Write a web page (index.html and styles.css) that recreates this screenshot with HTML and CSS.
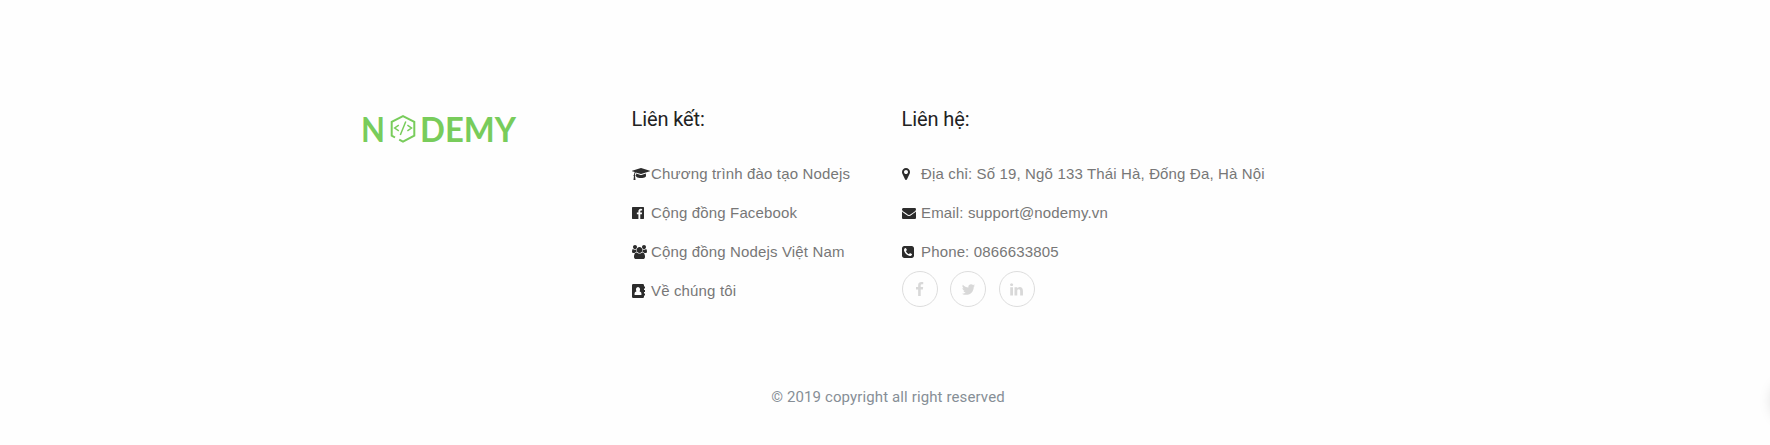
FILE: index.html
```html
<!DOCTYPE html>
<html lang="vi">
<head>
<meta charset="utf-8">
<title>Nodemy</title>
<link rel="stylesheet" href="styles.css">
</head>
<body>
<footer class="footer">
  <div class="columns">
    <div class="brand">
      <svg class="logo" width="160" height="46" viewBox="0 -3 160 46">
        <g class="logo-text">
          <text x="-1" y="32.500" textLength="24" lengthAdjust="spacingAndGlyphs">N</text>
          <text x="58" y="32.500" textLength="96" lengthAdjust="spacingAndGlyphs">DEMY</text>
        </g>
        <g class="logo-mark">
          <path d="M33 28.500L29.700 26.600V12.800L41 7L52.300 12.800V26.600L41 32.700L37.200 30.600"/>
          <path class="logo-code" d="M36.800 16.200L32.700 19L36.800 21.800M45.400 16.200L49.500 19L45.400 21.800M43.800 12.500L38.300 26"/>
        </g>
      </svg>
    </div>
    <div class="links">
      <h2 class="title">Liên kết:</h2>
      <ul class="list">
        <li class="item"><span class="icon"><svg width="18" height="14" viewBox="0 0 2304 1792"><path d="M1774 836l18 316q4 69-82 128t-235 93.500-323 34.500-323-34.500-235-93.500-82-128l18-316 574 181q22 7 48 7t48-7zm530-324q0 23-22 31l-1120 352q-4 1-10 1t-10-1l-652-206q-43 34-71 111.500t-34 178.500q63 36 63 109 0 69-58 107l58 433q2 14-8 25-9 11-24 11h-192q-15 0-24-11-10-11-8-25l58-433q-58-38-58-107 0-73 65-111 11-207 98-330l-333-104q-22-8-22-31t22-31l1120-352q4-1 10-1t10 1l1120 352q22 8 22 31z"/></svg></span>Chương trình đào tạo Nodejs</li>
        <li class="item"><span class="icon"><svg width="12" height="14" viewBox="128 0 1536 1792"><path d="M1579 128q35 0 60 25t25 60v1366q0 35-25 60t-60 25h-391v-595h199l30-232h-229v-148q0-56 23.500-84t91.500-28l122-1v-207q-63-9-178-9-136 0-217.500 80t-81.500 226v171h-200v232h200v595h-735q-35 0-60-25t-25-60v-1366q0-35 25-60t60-25h1366z"/></svg></span>Cộng đồng Facebook</li>
        <li class="item"><span class="icon"><svg width="15" height="14" viewBox="-64 0 1920 1792"><path d="M529 896q-162 5-265 128h-134q-82 0-138-40.500t-56-118.500q0-353 124-353 6 0 43.500 21t97.500 42.500 119 21.500q67 0 133-23-5 37-5 66 0 139 81 256zm1071 637q0 120-73 189.500t-194 69.500h-874q-121 0-194-69.500t-73-189.500q0-53 3.500-103.500t14-109 26.500-108.500 43-97.500 62-81 85.500-53.500 111.500-20q10 0 43 21.500t73 48 107 48 135 21.500 135-21.500 107-48 73-48 43-21.500q61 0 111.500 20t85.500 53.500 62 81 43 97.500 26.500 108.500 14 109 3.500 103.500zm-1024-1277q0 106-75 181t-181 75-181-75-75-181 75-181 181-75 181 75 75 181zm704 384q0 159-112.500 271.500t-271.500 112.500-271.500-112.500-112.500-271.500 112.500-271.500 271.500-112.500 271.500 112.500 112.500 271.500zm576 225q0 78-56 118.500t-138 40.500h-134q-103-123-265-128 81-117 81-256 0-29-5-66 66 23 133 23 59 0 119-21.500t97.500-42.500 43.500-21q124 0 124 353zm-128-609q0 106-75 181t-181 75-181-75-75-181 75-181 181-75 181 75 75 181z"/></svg></span>Cộng đồng Nodejs Việt Nam</li>
        <li class="item"><span class="icon"><svg width="14" height="14" viewBox="0 0 14 14"><path fill-rule="evenodd" d="M1.200 0h9.600q1.200 0 1.200 1.200V2.500h1v2h-1v1.500h1v2h-1v1.500h1v2h-1v1.300q0 1.200-1.200 1.200H1.200Q0 14 0 12.800V1.200Q0 0 1.200 0zM6 3a2.200 2.500 0 0 0-1.500 4.200Q2.400 7.700 2.400 10.200q0 .8.800.8h5.600q.8 0 .8-.8 0-2.500-2.100-3A2.200 2.500 0 0 0 6 3z"/></svg></span>Về chúng tôi</li>
      </ul>
    </div>
    <div class="contact">
      <h2 class="title">Liên hệ:</h2>
      <ul class="list">
        <li class="item"><span class="icon"><svg width="8" height="14" viewBox="384 0 1024 1792"><path d="M1152 640q0-106-75-181t-181-75-181 75-75 181 75 181 181 75 181-75 75-181zm256 0q0 109-33 179l-364 774q-16 33-47.500 52t-67.500 19-67.500-19-46.500-52l-365-774q-33-70-33-179 0-212 150-362t362-150 362 150 150 362z"/></svg></span>Địa chỉ: Số 19, Ngõ 133 Thái Hà, Đống Đa, Hà Nội</li>
        <li class="item"><span class="icon"><svg width="14" height="14" viewBox="0 0 1792 1792"><path d="M1792 710v794q0 66-47 113t-113 47h-1472q-66 0-113-47t-47-113v-794q44 49 101 87 362 246 497 345 57 42 92.500 65.500t94.500 48 110 24.500h2q51 0 110-24.500t94.500-48 92.500-65.500q170-123 498-345 57-39 100-87zm0-294q0 79-49 151t-122 123q-376 261-468 325-10 7-42.500 31t-54 38.500-52 32.500-57.500 27-50 9h-2q-23 0-50-9t-57.500-27-52-32.500-54-38.500-42.500-31q-91-64-262-182.500t-205-142.500q-62-42-117-115.500t-55-136.500q0-78 41.500-130t118.500-52h1472q65 0 112.500 47t47.500 113z"/></svg></span>Email: support@nodemy.vn</li>
        <li class="item"><span class="icon"><svg width="12" height="14" viewBox="128 0 1536 1792"><path d="M1408 1193q0-11-2-16t-18-16.500-40.500-25-47.500-26.500-45.500-25-28.500-15q-5-3-19-13t-25-15-21-5q-15 0-36.500 20.500t-39.500 45-38.500 45-33.500 20.500q-7 0-16.500-3.500t-15.500-6.500-17-9.500-14-8.500q-99-55-170-126.500t-127-170.500q-2-3-8.500-14t-9.500-17-6.500-15.500-3.500-16.500q0-13 20.500-33.500t45-38.500 45-39.500 20.500-36.500q0-10-5-21t-15-25-13-19q-3-6-15-28.500t-25-45.500-26.500-47.500-25-40.500-16.500-18-16-2q-48 0-101 22-46 21-80 94.500t-34 130.500q0 16 2.500 34t5 30.500 9 33 10 29.500 12.500 33 11 30q60 164 216.500 320.500t320.500 216.500q6 2 30 11t33 12.500 29.500 10 33 9 30.500 5 34 2.500q57 0 130.500-34t94.500-80q22-53 22-101zm256-777v960q0 119-84.500 203.500t-203.500 84.500h-960q-119 0-203.500-84.500t-84.500-203.500v-960q0-119 84.500-203.500t203.500-84.500h960q119 0 203.500 84.500t84.500 203.500z"/></svg></span>Phone: 0866633805</li>
      </ul>
      <div class="social">
        <span class="circle"><svg width="15" height="15" viewBox="0 0 1792 1792"><path d="M1343 12v264h-157q-86 0-116 36t-30 108v189h293l-39 296h-254v759h-306v-759h-255v-296h255v-218q0-186 104-288.500t277-102.500q147 0 228 12z"/></svg></span>
        <span class="circle"><svg width="15" height="15" viewBox="0 0 1792 1792"><path d="M1684 408q-67 98-162 167 1 14 1 42 0 130-38 259.500t-115.500 248.500-184.500 210.500-258 146-323 54.500q-271 0-496-145 35 4 78 4 225 0 401-138-105-2-188-64.500t-114-159.500q33 5 61 5 43 0 85-11-112-23-185.500-111.500t-73.500-205.500v-4q68 38 146 41-66-44-105-115t-39-154q0-88 44-163 121 149 294.500 238.500t371.500 99.500q-8-38-8-74 0-134 94.500-228.500t228.500-94.500q140 0 236 102 109-21 205-78-37 115-142 178 93-10 186-50z"/></svg></span>
        <span class="circle"><svg width="15" height="15" viewBox="0 0 1792 1792"><path d="M477 625v991h-330v-991h330zm21-306q1 73-50.500 122t-135.500 49h-2q-82 0-132-49t-50-122q0-74 51.500-122.500t134.500-48.500 133 48.500 51 122.500zm1166 729v568h-329v-530q0-105-40.500-164.500t-126.500-59.500q-63 0-105.500 34.500t-63.500 85.500q-11 30-11 81v553h-329q2-399 2-647t-1-296l-1-48h329v144h-2q20-32 41-56t56.500-52 87-43.500 114.500-15.500q171 0 275 113.500t104 332.500z"/></svg></span>
      </div>
    </div>
  </div>
  <p class="copyright">© 2019 copyright all right reserved</p>
</footer>
<div class="float-button"></div>
</body>
</html>
```
FILE: styles.css
```css
* { box-sizing: border-box; }
body {
  margin: 0;
  height: 445px;
  position: relative;
  overflow: hidden;
  background: #fefefe;
  font-family: "Liberation Sans", Arial, sans-serif;
}
.footer { padding: 105px 0 0 362px; }
.columns {
  display: grid;
  grid-template-columns: 269.500px 270px 400px;
  height: 270px;
}
.brand { padding-top: 1px; }
.logo { display: block; overflow: visible; }
.logo-text {
  font: 700 34.500px Lato, sans-serif;
  fill: #78cc5b;
}
.logo-mark {
  fill: none;
  stroke: #78cc5b;
  stroke-width: 2;
}
.logo-code { stroke-width: 1.500; }
.title {
  margin: 0 0 29px;
  font: 400 20px/28px Roboto, sans-serif;
  letter-spacing: -.1px;
  color: #222;
}
.list {
  display: flex;
  flex-direction: column;
  gap: 15px;
  margin: 0;
  padding: 0;
  list-style: none;
}
.item {
  display: flex;
  align-items: center;
  height: 24px;
  font-size: 15px;
  line-height: 24px;
  letter-spacing: .15px;
  color: #777;
  white-space: nowrap;
}
.icon {
  display: flex;
  flex: none;
  width: 19.500px;
  fill: #2c2c2c;
}
.icon svg { flex: none; }
.social { display: flex; gap: 12.500px; margin-top: 7px; }
.circle {
  display: flex;
  align-items: center;
  justify-content: center;
  width: 36px;
  height: 36px;
  border: 1px solid #ddd;
  border-radius: 50%;
  fill: #d8d8d8;
}
.copyright {
  width: 1052px;
  margin: 10px 0 0;
  font: 400 15px/24px Roboto, sans-serif;
  letter-spacing: .12px;
  color: #868e96;
  text-align: center;
}
.float-button {
  position: absolute;
  left: 1772px;
  top: 379px;
  width: 44px;
  height: 44px;
  border-radius: 50%;
  box-shadow: 0 0 14px rgba(0, 0, 0, .15);
}
```
